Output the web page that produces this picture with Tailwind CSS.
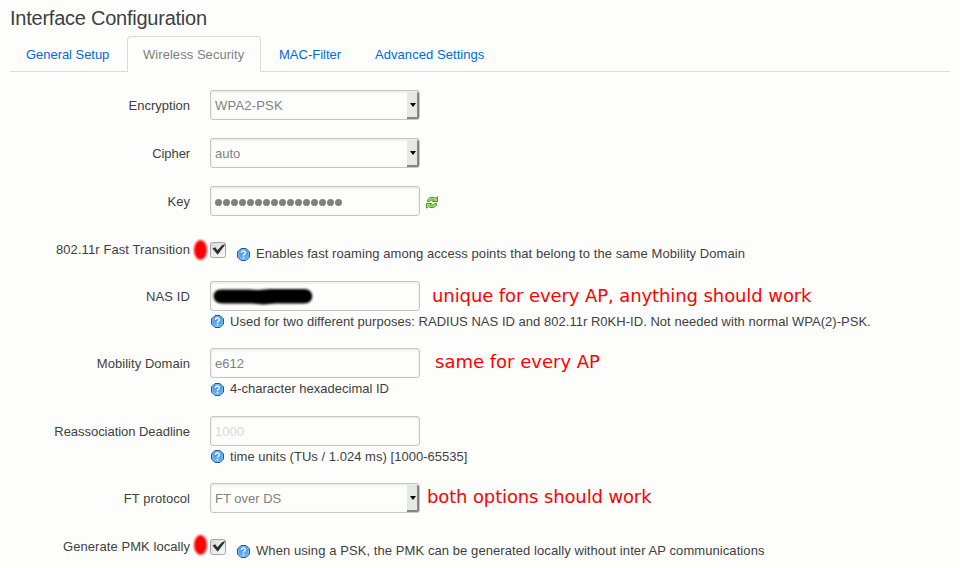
<!DOCTYPE html>
<html lang="en">
<head>
<meta charset="utf-8">
<title>Interface Configuration</title>
<script src="https://cdn.jsdelivr.net/npm/@tailwindcss/browser@4"></script>
</head>
<body class="h-[568px] w-[960px] overflow-hidden bg-[#fdfefc] font-['Liberation_Sans',Arial,sans-serif] text-[13px] leading-[18px] text-[#404040]">
<svg class="absolute size-0">
  <defs>
    <linearGradient id="blue" x1="0" y1="0" x2="0" y2="1"><stop offset="0" stop-color="#3f8fe0"/><stop offset="1" stop-color="#6ab8f5"/></linearGradient>
    <linearGradient id="boxfill" x1="0" y1="0" x2="1" y2="1"><stop offset="0" stop-color="#d9dbd8"/><stop offset="1" stop-color="#fafafa"/></linearGradient>
  </defs>
  <symbol id="help" viewBox="0 0 13 13">
    <path d="M4 .5h5L12.500 4v5L9 12.500H4L.5 9V4z" fill="url(#blue)" stroke="#1d5797"/>
    <path d="M4.300 1.500h4.400l2.800 2.800v4.400l-2.800 2.800H4.300L1.500 8.700V4.300z" fill="none" stroke="#8fc6f2" stroke-width=".7"/>
    <path d="M4.500 5V4.300C4.500 2.500 8.500 2.500 8.500 4.600 8.500 6 6.500 6 6.500 7.700" fill="none" stroke="#fff" stroke-width="1.400"/>
    <path d="M5.700 8.800h1.600v1.500H5.700z" fill="#fff"/>
  </symbol>
  <symbol id="check" viewBox="0 0 18 18">
    <rect x="1.500" y="1.500" width="15" height="15" rx="2" fill="url(#boxfill)" stroke="#a3a5a2"/>
    <path d="M3.500 7.500 6.200 6.300l2.200 3L13.200 4 16.500 3.300 8.700 13.800z" fill="#2c3033"/>
  </symbol>
  <symbol id="reload" viewBox="0 0 12 13">
    <path d="M1.500 5.500V4L4 1.500h4L9.500 2.500 11.500.8V5.500H6.500L7.700 4H5L3.200 5.500z" fill="#a2e06c" stroke="#428f1d" stroke-width=".9"/>
    <path d="M10.500 7.500V9L8 11.500H4L2.500 10.500.5 12.200V7.500H5.500L4.300 9H7L8.800 7.500z" fill="#a2e06c" stroke="#428f1d" stroke-width=".9"/>
  </symbol>
</svg>
<h1 class="h-9 pt-[6px] pl-[10px] text-[20px] leading-6 font-normal tracking-[-0.24px]">Interface Configuration</h1>
<nav class="mx-[10px] flex h-9 border-b border-[#d9dbd8] text-[#0069d6]">
  <a class="w-[117px] pt-[10px] pl-4"><span class="tracking-[-0.04px]">General Setup</span></a>
  <a class="h-9 w-[134px] rounded-t border border-b-0 border-[#d9dbd8] bg-[#fdfefc] pt-[9px] pl-[15px] tracking-[0.05px] text-[#808080]">Wireless Security</a>
  <a class="w-24 pt-[10px] pl-[18px]">MAC-Filter</a>
  <a class="pt-[10px] pl-[18px] tracking-[0.06px]">Advanced Settings</a>
</nav>
<main class="pt-[18px]">
  <div class="flex h-12">
    <label class="mr-5 w-[190px] pt-[7px] text-right">Encryption</label>
    <div class="flex h-[30px] w-[210px] justify-between rounded-[3px] border border-[#c4c6c3] pt-px pl-1 text-[#808080] shadow-[inset_0_1px_3px_rgba(0,0,0,0.1)]"><span class="pt-[5px] tracking-[0.2px]">WPA2-PSK</span><i class="flex h-[27px] w-3 items-center justify-end rounded-r-[2px] border-r-2 border-b-2 border-[#848683] bg-[#e6e8e5] pr-px"><svg class="h-1 w-[6px]" viewBox="0 0 6 4"><path d="M0 0h6L3 4z"/></svg></i></div>
  </div>
  <div class="flex h-12">
    <label class="mr-5 w-[190px] pt-[7px] text-right tracking-[-0.1px]">Cipher</label>
    <div class="flex h-[30px] w-[210px] justify-between rounded-[3px] border border-[#c4c6c3] pt-px pl-1 text-[#808080] shadow-[inset_0_1px_3px_rgba(0,0,0,0.1)]"><span class="pt-[5px]">auto</span><i class="flex h-[27px] w-3 items-center justify-end rounded-r-[2px] border-r-2 border-b-2 border-[#848683] bg-[#e6e8e5] pr-px"><svg class="h-1 w-[6px]" viewBox="0 0 6 4"><path d="M0 0h6L3 4z"/></svg></i></div>
  </div>
  <div class="flex h-12">
    <label class="mr-5 w-[190px] pt-[7px] text-right">Key</label>
    <div class="flex h-[30px] w-[210px] items-center gap-px rounded-[3px] border border-[#c4c6c3] pt-[3px] pl-1 shadow-[inset_0_1px_3px_rgba(0,0,0,0.1)]">
      <b class="size-[7px] rounded-full bg-[#808080]"></b><b class="size-[7px] rounded-full bg-[#808080]"></b><b class="size-[7px] rounded-full bg-[#808080]"></b><b class="size-[7px] rounded-full bg-[#808080]"></b><b class="size-[7px] rounded-full bg-[#808080]"></b><b class="size-[7px] rounded-full bg-[#808080]"></b><b class="size-[7px] rounded-full bg-[#808080]"></b><b class="size-[7px] rounded-full bg-[#808080]"></b><b class="size-[7px] rounded-full bg-[#808080]"></b><b class="size-[7px] rounded-full bg-[#808080]"></b><b class="size-[7px] rounded-full bg-[#808080]"></b><b class="size-[7px] rounded-full bg-[#808080]"></b><b class="size-[7px] rounded-full bg-[#808080]"></b><b class="size-[7px] rounded-full bg-[#808080]"></b><b class="size-[7px] rounded-full bg-[#808080]"></b><b class="size-[7px] rounded-full bg-[#808080]"></b>
    </div>
    <svg class="mt-[10px] ml-[6px] h-[13px] w-3"><use href="#reload"/></svg>
  </div>
  <div class="flex h-[47px]">
    <label class="w-[190px] pt-[7px] text-right tracking-[0.09px]">802.11r Fast Transition</label>
    <i class="mt-[6px] ml-1 h-5 w-[13px] rounded-[50%] bg-[#f00] blur-[1px]"></i>
    <svg class="mt-[7px] ml-[2px] size-[18px]"><use href="#check"/></svg>
    <svg class="mt-[14px] ml-[10px] size-[13px]"><use href="#help"/></svg>
    <span class="pt-[11px] pl-[6px] tracking-[0.07px]">Enables fast roaming among access points that belong to the same Mobility Domain</span>
  </div>
  <div class="flex h-[67px]">
    <label class="mr-5 w-[190px] pt-[7px] text-right tracking-[0.1px]">NAS ID</label>
    <div>
      <div class="flex"><div class="h-[30px] w-[210px] rounded-[3px] border border-[#c4c6c3] pt-[6px] pl-[2px] shadow-[inset_0_1px_3px_rgba(0,0,0,0.1)]"><svg class="h-[17px] w-[100px] overflow-visible blur-[0.8px]" viewBox="0 0 100 17"><path d="M8 1.500H35L45 2 57 1H91C102 1 102 15.500 91 15.500H63L50 16.500 39 15.500H9C-2 15.500-2 1.500 8 1.500z"/></svg></div><span class="pl-3 font-['DejaVu_Sans'] text-[18px] leading-[29px] tracking-[-0.09px] text-[#f00]">unique for every AP, anything should work</span></div>
      <div class="flex pt-[2px]"><svg class="mt-[2px] ml-[1px] size-[13px]"><use href="#help"/></svg><span class="pl-[6px] tracking-[0.027px]">Used for two different purposes: RADIUS NAS ID and 802.11r R0KH-ID. Not needed with normal WPA(2)-PSK.</span></div>
    </div>
  </div>
  <div class="flex h-[68px]">
    <label class="mr-5 w-[190px] pt-[7px] text-right tracking-[0.05px]">Mobility Domain</label>
    <div>
      <div class="flex"><div class="h-[30px] w-[210px] rounded-[3px] border border-[#c4c6c3] pt-[6px] pl-1 text-[#808080] shadow-[inset_0_1px_3px_rgba(0,0,0,0.1)]">e612</div><span class="pl-[15px] font-['DejaVu_Sans'] text-[18px] leading-7 text-[#f00]">same for every AP</span></div>
      <div class="flex pt-[2px]"><svg class="mt-[3px] ml-[1px] size-[13px]"><use href="#help"/></svg><span class="pl-[6px]">4-character hexadecimal ID</span></div>
    </div>
  </div>
  <div class="flex h-[67px]">
    <label class="mr-5 w-[190px] pt-[7px] text-right tracking-[-0.04px]">Reassociation Deadline</label>
    <div>
      <div class="h-[30px] w-[210px] rounded-[3px] border border-[#c4c6c3] pt-[6px] pl-1 text-[#d8d9d7] shadow-[inset_0_1px_3px_rgba(0,0,0,0.1)]">1000</div>
      <div class="flex pt-[2px]"><svg class="mt-[2px] ml-[1px] size-[13px]"><use href="#help"/></svg><span class="pl-[6px] tracking-[0.03px]">time units (TUs / 1.024 ms) [1000-65535]</span></div>
    </div>
  </div>
  <div class="flex h-12">
    <label class="mr-5 w-[190px] pt-[7px] text-right tracking-[0.06px]">FT protocol</label>
    <div class="flex h-[30px] w-[210px] justify-between rounded-[3px] border border-[#c4c6c3] pt-px pl-1 text-[#808080] shadow-[inset_0_1px_3px_rgba(0,0,0,0.1)]"><span class="pt-[5px]">FT over DS</span><i class="flex h-[27px] w-3 items-center justify-end rounded-r-[2px] border-r-2 border-b-2 border-[#848683] bg-[#e6e8e5] pr-px"><svg class="h-1 w-[6px]" viewBox="0 0 6 4"><path d="M0 0h6L3 4z"/></svg></i></div>
    <span class="pl-[7px] font-['DejaVu_Sans'] text-[18px] leading-7 tracking-[-0.13px] text-[#f00]">both options should work</span>
  </div>
  <div class="flex h-[37px]">
    <label class="w-[190px] pt-[7px] text-right tracking-[0.06px]">Generate PMK locally</label>
    <i class="mt-1 ml-1 h-5 w-[13px] rounded-[50%] bg-[#f00] blur-[1px]"></i>
    <svg class="mt-[7px] ml-[2px] size-[18px]"><use href="#check"/></svg>
    <svg class="mt-[14px] ml-[10px] size-[13px]"><use href="#help"/></svg>
    <span class="pt-[11px] pl-[6px] tracking-[0.08px]">When using a PSK, the PMK can be generated locally without inter AP communications</span>
  </div>
</main>
</body>
</html>
